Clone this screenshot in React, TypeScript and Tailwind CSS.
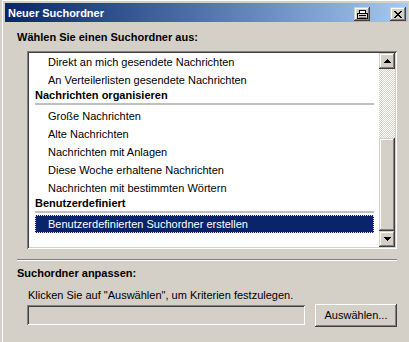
import React from "react";

const raised =
  "shadow-[inset_-1px_-1px_#404040,inset_1px_1px_#d4d0c8,inset_-2px_-2px_#808080,inset_2px_2px_#ffffff]";
const pushBtn =
  "shadow-[inset_-1px_-1px_#404040,inset_1px_1px_#ffffff,inset_-2px_-2px_#808080]";
const sunken =
  "shadow-[inset_1px_1px_#808080,inset_-1px_-1px_#ffffff,inset_2px_2px_#404040,inset_-2px_-2px_#d4d0c8]";

function Printer() {
  return (
    <svg width="11" height="9" viewBox="0 0 11 9" shapeRendering="crispEdges">
      <rect x="2.5" y="0.5" width="6" height="3" fill="#fff" stroke="#000" />
      <rect x="0.5" y="3.5" width="10" height="5" fill="#d4d0c8" stroke="#000" />
      <line x1="2" y1="5.5" x2="9" y2="5.5" stroke="#000" />
      <line x1="2" y1="7" x2="9" y2="7" stroke="#808080" />
    </svg>
  );
}

function CloseX() {
  const rows = [0, 1, 2, 3, 4, 5, 6];
  return (
    <svg width="8" height="7" viewBox="0 0 8 7" shapeRendering="crispEdges">
      {rows.map((i) => (
        <React.Fragment key={i}>
          <rect x={i} y={i} width="2" height="1" fill="#000" />
          <rect x={6 - i} y={i} width="2" height="1" fill="#000" />
        </React.Fragment>
      ))}
    </svg>
  );
}

function Arrow({ up }: { up: boolean }) {
  const rows = [0, 1, 2, 3];
  return (
    <svg width="7" height="4" viewBox="0 0 7 4" shapeRendering="crispEdges">
      {rows.map((i) => {
        const r = up ? i : 3 - i;
        return <rect key={i} x={3 - r} y={i} width={2 * r + 1} height="1" fill="#000" />;
      })}
    </svg>
  );
}

function Item({ children }: { children: React.ReactNode }) {
  return <div className="h-[18px] leading-[18px] pl-[13px] whitespace-nowrap">{children}</div>;
}

function Header({ children }: { children: React.ReactNode }) {
  return (
    <div>
      <div className="h-[13px] leading-[13px] font-bold whitespace-nowrap">{children}</div>
      <div className="mt-[1px] mb-[2px] h-[2px] bg-[#c0c0c0]" />
    </div>
  );
}

export default function App() {
  return (
    <div className="w-[409px] h-[342px] overflow-hidden bg-[#d4d0c8] font-['Liberation_Sans',Arial,sans-serif] text-[11px] text-black">
      <div className="ml-[2px] h-full border-l border-t border-white pl-[2px] pt-[2px]">
        {/* Caption */}
        <div className="w-[403px] h-[19px] flex items-start bg-gradient-to-r from-[#0a246a] to-[#a6caf0]">
          <div className="ml-[3px] mt-[4px] h-[13px] leading-[13px] font-bold text-white whitespace-nowrap">
            Neuer Suchordner
          </div>
          <div className={`ml-auto mt-[4px] w-[16px] h-[14px] bg-[#d4d0c8] flex items-center justify-center ${raised}`}>
            <Printer />
          </div>
          <div className={`ml-[20px] mr-[2px] mt-[4px] w-[16px] h-[14px] bg-[#d4d0c8] flex items-center justify-center ${raised}`}>
            <CloseX />
          </div>
        </div>

        {/* Body */}
        <div className="pl-[12px]">
          <div className="mt-[9px] h-[13px] leading-[13px] font-bold whitespace-nowrap">
            Wählen Sie einen Suchordner aus:
          </div>

          {/* List box */}
          <div className={`ml-[10px] mt-[7px] w-[370px] h-[198px] p-[2px] bg-white flex ${sunken}`}>
            <div className="flex-1 pl-[6px] pr-[5px] overflow-hidden">
              <Item>Direkt an mich gesendete Nachrichten</Item>
              <Item>An Verteilerlisten gesendete Nachrichten</Item>
              <Header>Nachrichten organisieren</Header>
              <Item>Große Nachrichten</Item>
              <Item>Alte Nachrichten</Item>
              <Item>Nachrichten mit Anlagen</Item>
              <Item>Diese Woche erhaltene Nachrichten</Item>
              <Item>Nachrichten mit bestimmten Wörtern</Item>
              <Header>Benutzerdefiniert</Header>
              <div className="h-[18px] leading-[16px] pl-[12px] bg-[#0a246a] text-white border border-dotted border-[#ece4a8] whitespace-nowrap">
                Benutzerdefinierten Suchordner erstellen
              </div>
            </div>
            {/* Scrollbar */}
            <div className="w-[16px] flex flex-col">
              <div className={`h-[16px] bg-[#d4d0c8] flex items-center justify-center ${raised}`}>
                <Arrow up={true} />
              </div>
              <div className="h-[69px] bg-[repeating-conic-gradient(#d4d0c8_0_25%,#ffffff_0_50%)] [background-size:2px_2px]" />
              <div className={`h-[93px] bg-[#d4d0c8] ${raised}`} />
              <div className={`h-[16px] bg-[#d4d0c8] flex items-center justify-center ${raised}`}>
                <Arrow up={false} />
              </div>
            </div>
          </div>

          {/* Etched separator */}
          <div className="mt-[10px] w-[380px] h-[2px] border-t border-[#808080] border-b border-b-white" />

          <div className="mt-[6px] h-[13px] leading-[13px] font-bold whitespace-nowrap">
            Suchordner anpassen:
          </div>
          <div className="ml-[11px] mt-[9px] h-[13px] leading-[13px] whitespace-nowrap">
            Klicken Sie auf "Auswählen", um Kriterien festzulegen.
          </div>
          <div className="mt-[2px] ml-[10px] flex items-start">
            <div className={`mt-[1px] w-[278px] h-[20px] bg-[#d4d0c8] ${sunken}`} />
            <div className={`ml-[10px] w-[82px] h-[23px] bg-[#d4d0c8] flex items-center justify-center whitespace-nowrap ${pushBtn}`}>
              Auswählen...
            </div>
          </div>
        </div>
      </div>
    </div>
  );
}
